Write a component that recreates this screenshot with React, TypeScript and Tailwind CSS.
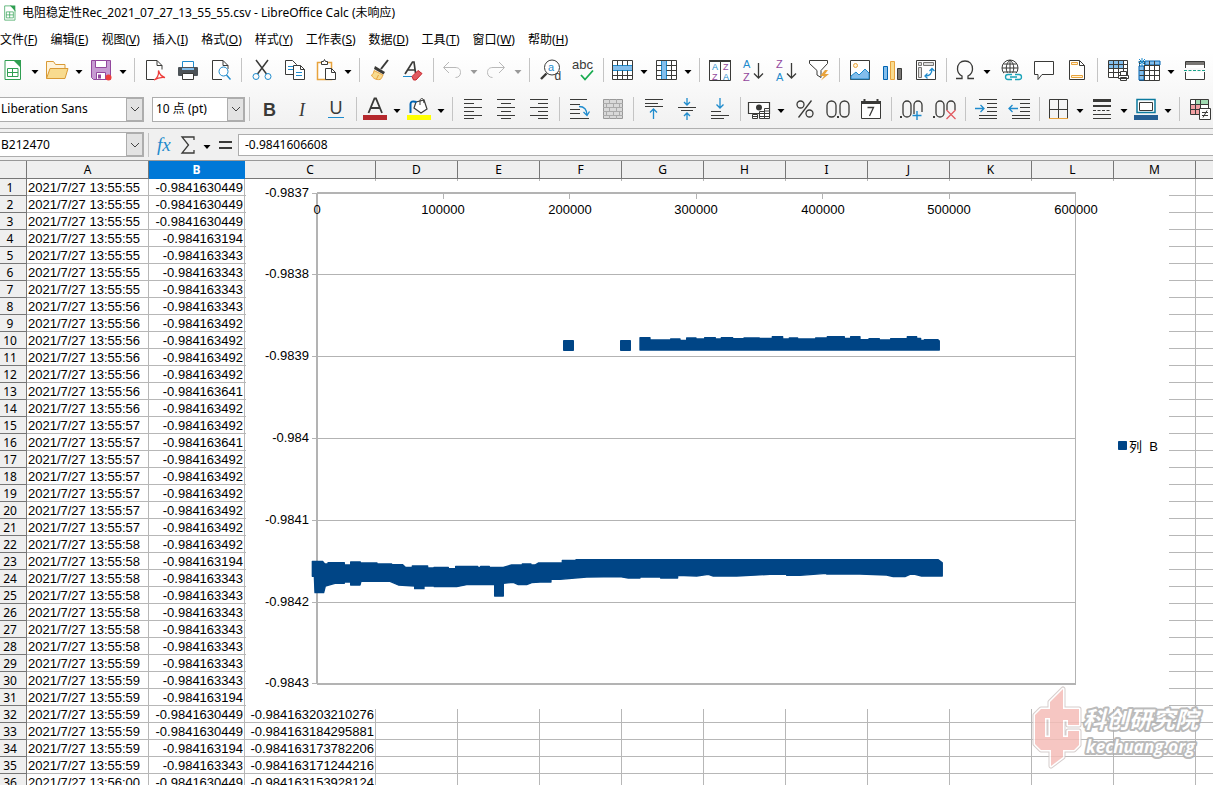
import type { ReactNode } from "react";

const INK = "#3a3a38";
const BLUE = "#1e8bcd";
const GRAY = "#797774";

const menus = [
  ["文件", "F"],
  ["编辑", "E"],
  ["视图", "V"],
  ["插入", "I"],
  ["格式", "O"],
  ["样式", "Y"],
  ["工作表", "S"],
  ["数据", "D"],
  ["工具", "T"],
  ["窗口", "W"],
  ["帮助", "H"],
];

// All icons are drawn on a 24 x 24 grid.
const icons: Record<string, ReactNode> = {
  newSheet: (
    <>
      <path d="M4 2.5h10l5.5 5.5v13.5H4z" fill="#fff" stroke="#2f9e51" />
      <path d="M12 2h8v8z" fill="#2f9e51" />
      <path d="M6.500 10.500h10.500v8H6.500zM6.500 14.500h10.500M11.500 10.500v8" stroke="#2f9e51" />
    </>
  ),
  open: (
    <>
      <path d="M1.500 20.500v-17h7l2 3h9.500v4" fill="#fff3da" stroke="#d99a35" />
      <path d="M1.500 20.500l3.500-10h18l-3 10z" fill="#f8db8f" stroke="#d99a35" />
    </>
  ),
  save: (
    <>
      <path d="M2.500 2.500h19v19h-17l-2-2z" fill="#c79bd2" stroke="#92479d" />
      <path d="M6.500 2.500h11v7h-11z" fill="#fff" stroke="#92479d" />
      <path d="M7.500 14.500h9v7h-9z" fill="#fff" stroke="#92479d" />
      <path d="M9 16.500h3v4H9z" fill="#92479d" />
      <circle cx="19.500" cy="19.500" r="3" fill="#ed3d3b" />
    </>
  ),
  pdf: (
    <>
      <path d="M11 21.500H3.500v-19H14l5 5v4" fill="#fff" stroke={INK} />
      <path d="M14 2.500v5h5" stroke={INK} />
      <path d="M11 22c3-1 5-5 4.500-9.500 1 4 3 6 6.500 7-4-.5-7 0-11 2.500z" stroke="#ed3d3b" strokeWidth="1.3" />
    </>
  ),
  print: (
    <>
      <path d="M6.500 10V3.500h11V10" fill="#fff" stroke={BLUE} />
      <rect x="2" y="9" width="20" height="9" rx="1" fill="#4d5358" />
      <path d="M6 10h12v2H6z" fill="#83beec" />
      <path d="M6.500 15.500h11v6h-11z" fill="#fff" stroke={INK} />
    </>
  ),
  preview: (
    <>
      <path d="M13 21.500H3.500v-19H14l5 5V11" fill="#fff" stroke={INK} />
      <path d="M14 2.500v5h5" stroke={INK} />
      <circle cx="14.500" cy="13.500" r="4.500" fill="#fff" stroke={BLUE} />
      <path d="M17.500 17l4 4.500" stroke={BLUE} strokeWidth="1.4" />
    </>
  ),
  cut: (
    <>
      <path d="M6 2l10.500 14M18 2L7.500 16" stroke={INK} strokeWidth="1.500" />
      <circle cx="6" cy="18.500" r="3" stroke={BLUE} />
      <circle cx="18" cy="18.500" r="3" stroke={BLUE} />
    </>
  ),
  copy: (
    <>
      <path d="M2.500 2.500h7l4 4v10h-11z" fill="#fff" stroke={INK} />
      <path d="M5 8.500h5M5 11.500h5" stroke={BLUE} />
      <path d="M10.500 7.500h7l4 4v10h-11z" fill="#fff" stroke={INK} />
      <path d="M17.500 7.500v4h4" stroke={INK} />
      <path d="M13 14.500h6M13 17.500h6" stroke={BLUE} />
    </>
  ),
  paste: (
    <>
      <path d="M3.500 4.500h14v17h-14z" fill="#fff" stroke="#e8a33d" strokeWidth="1.500" />
      <path d="M7.500 6.500v-3h2l1-2 1 2h2v3z" fill="#fff" stroke={INK} />
      <path d="M11.500 10.500h6l4 4v7h-10z" fill="#fff" stroke={INK} />
      <path d="M17.500 10.500v4h4" stroke={INK} />
    </>
  ),
  brush: (
    <>
      <path d="M20 2l-7 9" stroke={INK} strokeWidth="2" />
      <path d="M7 8l10 6-1.500 2.500L6 11z" fill={INK} />
      <path d="M6 12.500l9 4.500c-1 2-1.500 4-3 4.500-4 .5-7-1-8.500-4.500 1.500-.5 2.500-2.500 2.500-4.500z" fill="#f8db8f" stroke="#e8a33d" />
      <path d="M8.500 21l2-4" stroke="#e8a33d" />
    </>
  ),
  clearFormat: (
    <>
      <path d="M4 16L11.500 4h1.500l1.500 11M7 12h7" stroke={INK} strokeWidth="1.700" />
      <path d="M2 18.500h9" stroke={BLUE} />
      <path d="M11 18.500l6-6 4 3-6 6.500h-2.500z" fill="#e05a60" stroke="#c9252b" />
    </>
  ),
  undo: <path d="M9 4L3.500 9.500 9 15M4 9.500h11c4 0 5.500 2 5.500 5s-2 5-5 5" stroke="#b8b8b8" />,
  redo: <path d="M15 4l5.500 5.500L15 15M20 9.500H9c-4 0-5.500 2-5.500 5s2 5 5 5" stroke="#b8b8b8" />,
  find: (
    <>
      <circle cx="14" cy="9.500" r="7.500" fill="#fff" stroke={INK} />
      <path d="M8.500 15.500L3 21" stroke={INK} strokeWidth="2.400" />
      <text x="10" y="13" fontSize="11" fill={BLUE}>a</text>
      <text x="16.500" y="22" fontSize="12" fill={INK}>d</text>
    </>
  ),
  spell: (
    <>
      <text x="1" y="11" fontSize="13" fill={INK}>abc</text>
      <path d="M10 17l4 4.500 8-9" stroke="#18ab50" strokeWidth="1.800" />
    </>
  ),
  row: (
    <>
      <path d="M2.500 2.500h20v19h-20z" fill="#fff" />
      <path d="M2 7h21v6H2z" fill="#83beec" />
      <path d="M2.500 7.500h20M2.500 12.500h20" stroke={BLUE} />
      <path d="M2.500 2.500h20v19h-20zM2.500 17.500h20M7.500 2.500v5M12.500 2.500v5M17.500 2.500v5M7.500 12.500v9M12.500 12.500v9M17.500 12.500v9" stroke={INK} />
    </>
  ),
  column: (
    <>
      <path d="M2.500 2.500h20v19h-20z" fill="#fff" />
      <path d="M8 2h5v20H8z" fill="#83beec" />
      <path d="M7.500 2.500v19M12.500 2.500v19" stroke={BLUE} />
      <path d="M2.500 2.500h20v19h-20zM17.500 2.500v19M2.500 7.500h5M2.500 12.500h5M2.500 17.500h5M12.500 7.500h10M12.500 12.500h10M12.500 17.500h10" stroke={INK} />
    </>
  ),
  sort: (
    <>
      <path d="M1.500 2.500h21v20h-21zM12.500 2.500v20" fill="#fff" stroke={INK} />
      <path d="M1 2h22v2H1z" fill={INK} />
      <text x="4" y="12" fontSize="9" fill={BLUE}>A</text>
      <text x="4" y="22" fontSize="9" fill="#92479d">Z</text>
      <text x="15" y="12" fontSize="9" fill="#92479d">Z</text>
      <text x="15" y="22" fontSize="9" fill={BLUE}>A</text>
    </>
  ),
  sortAsc: (
    <>
      <text x="2" y="10" fontSize="11" fill={BLUE}>A</text>
      <text x="2" y="23" fontSize="11" fill="#92479d">Z</text>
      <path d="M17.500 5v15M13 15.500l4.500 4.500 4.500-4.500" stroke={INK} strokeWidth="1.300" />
    </>
  ),
  sortDesc: (
    <>
      <text x="2" y="10" fontSize="11" fill="#92479d">Z</text>
      <text x="2" y="23" fontSize="11" fill={BLUE}>A</text>
      <path d="M17.500 5v15M13 15.500l4.500 4.500 4.500-4.500" stroke={INK} strokeWidth="1.300" />
    </>
  ),
  filter: (
    <>
      <path d="M2.500 2.500h18v3l-6.500 7v7l-4-2.500v-4.500l-7.500-7z" fill="#fff" stroke={INK} />
      <path d="M18 12l-5 6h4l-3 4.500 8-6.500h-4l3-4z" fill="#e8a33d" />
    </>
  ),
  image: (
    <>
      <path d="M2.500 2.500h19v19h-19z" fill="#fff" stroke={INK} />
      <circle cx="7.500" cy="7.500" r="2" fill="#fff3da" stroke="#e8a33d" />
      <path d="M3 18l5-4 3 3 6-6 4 4v6H3z" fill="#83beec" stroke={BLUE} />
    </>
  ),
  chart: (
    <>
      <path d="M2.500 8.500h4v13h-4z" fill="#83beec" stroke="#0063b1" />
      <path d="M9.500 3.500h4v18h-4z" fill="#f8db8f" stroke="#e8a33d" />
      <path d="M16.500 10.500h4v11h-4z" fill={GRAY} stroke={INK} />
    </>
  ),
  pivot: (
    <>
      <path d="M2.500 2.500h19v19h-19z" fill="#fff" stroke={INK} />
      <path d="M4.500 4.500h3v3h-3zM9.500 4.500h10v3h-10zM4.500 9.500h3v10h-3z" fill="#ddd" stroke={GRAY} />
      <path d="M11 18c5 0 7-2 7-7M15.500 13l2.500-2.500 2.500 2.500M13.500 15.500L11 18l2.500 2.500" stroke={BLUE} strokeWidth="1.300" />
    </>
  ),
  omega: (
    <path d="M3 20.500h6v-2.500c-3-1.500-4.500-4-4.500-7 0-5 3-8 7.500-8s7.500 3 7.500 8c0 3-1.500 5.500-4.500 7v2.500h6" stroke={INK} strokeWidth="1.300" />
  ),
  link: (
    <>
      <circle cx="11" cy="10" r="8" fill="#fff" stroke={INK} />
      <path d="M3 10h16M4.500 6h13M4.500 14h13M11 2v16M11 2c-5 4-5 12 0 16M11 2c5 4 5 12 0 16" stroke={INK} />
      <path d="M5 15h18v8H5z" fill="#fafafa" />
      <path d="M13 16.500H9a2.500 2.500 0 000 5h4M16 16.500h4a2.500 2.500 0 010 5h-4M11 19h7" stroke="#1aa3b8" strokeWidth="1.300" />
    </>
  ),
  comment: <path d="M2.500 3.500h19v13H10l-4 5v-5H2.500z" fill="#fff" stroke={INK} />,
  headerFooter: (
    <>
      <path d="M4.500 2.500h10l5 5v14h-15z" fill="#fff" stroke={INK} />
      <path d="M14.500 2.500v5h5" stroke={INK} />
      <path d="M6.500 4.500h6v2h-6zM6.500 17.500h11v2h-11z" fill="#fff3da" stroke="#e8a33d" />
    </>
  ),
  printArea: (
    <>
      <path d="M2.500 2.500h19v17h-19z" fill="#fff" />
      <path d="M3 3h14v8H3z" fill="#83beec" />
      <path d="M2.500 2.500h19v17h-19zM2.500 6.500h19M2.500 10.500h19M2.500 14.500h19M7.500 2.500v17M12.500 2.500v17M17.500 2.500v17" stroke={INK} />
      <path d="M14.500 13.500h6v4h-6zM12.500 17.500h10v3h-10zM14.500 19.500h6v3h-6z" fill="#fff" stroke={INK} />
    </>
  ),
  freeze: (
    <>
      <path d="M2.500 3.500h20v19h-20z" fill="#fff" stroke={INK} />
      <path d="M8 3h15v4H8zM2 8h5v14H2z" fill="#83beec" stroke="#0063b1" />
      <path d="M7.500 3v19M12.500 3v19M17.500 3v19M2.500 12.500h20M2.500 17.500h20M7.500 7.500h15" stroke={INK} />
      <path d="M5 0v8M1 4h8M2 1l6 6M8 1L2 7" stroke={BLUE} />
    </>
  ),
  split: (
    <>
      <path d="M2.500 3.500h19v18h-19z" fill="#fff" stroke={INK} />
      <path d="M3 4h18v3H3z" fill={GRAY} />
      <path d="M0 10h24v4H0z" fill="#fafafa" />
      <path d="M1 12.500h22" stroke="#1aa38a" strokeDasharray="3 1.500" />
    </>
  ),
  bold: <text x="5" y="18.500" fontSize="18" fontWeight="700" fill={INK}>B</text>,
  italic: <text x="8" y="18.500" fontSize="18" fontStyle="italic" fontFamily="Liberation Serif, serif" fill={INK}>I</text>,
  underline: (
    <>
      <text x="5.500" y="17" fontSize="18" fill={INK}>U</text>
      <path d="M4 20.500h16" stroke={BLUE} />
    </>
  ),
  fontColor: (
    <>
      <path d="M5.500 16L11.500 1.500h1.500L19 16M8 11h8.500" stroke={INK} strokeWidth="1.800" />
      <path d="M0 18h24v5H0z" fill="#b5282d" />
    </>
  ),
  highlight: (
    <>
      <path d="M9 5l8-2 3 9-6 4-7-5z" fill="#fff" stroke={INK} strokeWidth="1.200" />
      <path d="M13 8V3c1-2 3-2 3.500 0L17 6" stroke={INK} />
      <path d="M3.500 16V7c0-2 2-3.500 6-2" stroke="#0063b1" strokeWidth="2" />
      <path d="M0 18h24v5H0z" fill="#ffff00" />
    </>
  ),
  left: <path d="M3 2.500h18M3 6.500h10M3 10.500h18M3 14.500h10M3 18.500h18M3 21.500h10" stroke={INK} />,
  center: <path d="M3 2.500h18M7 6.500h10M3 10.500h18M7 14.500h10M3 18.500h18M7 21.500h10" stroke={INK} />,
  right: <path d="M3 2.500h18M11 6.500h10M3 10.500h18M11 14.500h10M3 18.500h18M11 21.500h10" stroke={INK} />,
  wrap: (
    <>
      <path d="M2 2.500h17M2 7.500h10M2 12.500h10M2 16.500h10M2 21.500h19" stroke={INK} />
      <path d="M11 9.500c6 0 8 3 8 9M15.500 15l3.500 3.500 2.500-4" stroke={BLUE} strokeWidth="1.300" />
    </>
  ),
  merge: (
    <>
      <path d="M2.500 2.500h19v19h-19z" fill="#d9d9d9" stroke="#999" />
      <path d="M2 6.500h20M2 10.500h20M2 14.500h20M2 18.500h20M8.500 2v4M15.500 2v4M5.500 6v4M12.500 6v4M18.500 6v4M8.500 10v4M15.500 10v4M5.500 14v4M12.500 14v4M18.500 14v4M8.500 18v4M15.500 18v4" stroke="#aaa" />
    </>
  ),
  top: (
    <>
      <path d="M3 2.500h18M3 6.500h13M3 9.500h18" stroke={INK} />
      <path d="M11.500 22V12M8 15.500l3.500-3.500 3.500 3.500" stroke={BLUE} strokeWidth="1.300" />
    </>
  ),
  middle: (
    <>
      <path d="M3 10.500h18M6 13.500h12" stroke={INK} />
      <path d="M12 1v7M9 5l3 3 3-3M12 23v-7M9 19l3-3 3 3" stroke={BLUE} strokeWidth="1.300" />
    </>
  ),
  bottom: (
    <>
      <path d="M3 14.500h10M3 18.500h18M3 21.500h13" stroke={INK} />
      <path d="M12 1v10M8.500 7.500L12 11l3.500-3.500" stroke={BLUE} strokeWidth="1.300" />
    </>
  ),
  currency: (
    <>
      <path d="M1.500 5.500h21v11h-21z" fill="#fff" stroke={INK} strokeWidth="1.200" />
      <circle cx="12" cy="10.500" r="3" fill={INK} />
      <path d="M5.500 17.500h5v4h-5zM12.500 14.500h5v7h-5zM17.500 11.500h5v10h-5z" fill="#fff" stroke={INK} />
      <path d="M5 19.500h6M12 16.500h11M12 19.500h11M17 14h6" stroke={INK} />
    </>
  ),
  percent: (
    <>
      <circle cx="7.500" cy="7.500" r="3.500" stroke={INK} strokeWidth="1.300" />
      <circle cx="16.500" cy="16.500" r="3.500" stroke={INK} strokeWidth="1.300" />
      <path d="M18.500 3.500l-13 17" stroke={INK} strokeWidth="1.300" />
    </>
  ),
  number: (
    <>
      <rect x="1" y="4" width="9" height="16" rx="4.500" stroke={INK} strokeWidth="1.300" />
      <rect x="14" y="4" width="9" height="16" rx="4.500" stroke={INK} strokeWidth="1.300" />
      <path d="M11 19h2v2h-2z" fill={INK} />
    </>
  ),
  date: (
    <>
      <path d="M2.500 4.500h19v17h-19z" fill="#fff" stroke={INK} />
      <path d="M2 4h20v3H2z" fill={INK} />
      <path d="M5.500 2v4M18.500 2v4" stroke={INK} strokeWidth="2" />
      <path d="M8.500 10.500h6l-4 8.500" stroke={INK} strokeWidth="1.300" />
    </>
  ),
  addDecimal: (
    <>
      <path d="M0 19h2v2H0z" fill={INK} />
      <rect x="3" y="4" width="8" height="16" rx="4" stroke={INK} strokeWidth="1.300" />
      <path d="M14 17V8a4 4 0 018 0v7" stroke={INK} strokeWidth="1.300" />
      <path d="M17 14v9M12.500 18.500h9" stroke={BLUE} strokeWidth="1.400" />
    </>
  ),
  removeDecimal: (
    <>
      <path d="M0 19h2v2H0z" fill={INK} />
      <rect x="3" y="4" width="8" height="16" rx="4" stroke={INK} strokeWidth="1.300" />
      <path d="M14 13V8a4 4 0 018 0v5" stroke={INK} strokeWidth="1.300" />
      <path d="M13.500 13l9 9M22.500 13l-9 9" stroke="#e05a60" strokeWidth="1.300" />
    </>
  ),
  indent: (
    <>
      <path d="M5 2.500h18M13 6.500h10M13 10.500h10M13 14.500h10M5 18.500h18M5 21.500h18" stroke={INK} />
      <path d="M1 11.500h9M6.500 8l3.500 3.500L6.500 15" stroke={BLUE} strokeWidth="1.300" />
    </>
  ),
  outdent: (
    <>
      <path d="M5 2.500h18M13 6.500h10M13 10.500h10M13 14.500h10M5 18.500h18M5 21.500h18" stroke={INK} />
      <path d="M2 11.500h9M5.500 8L2 11.500 5.500 15" stroke={BLUE} strokeWidth="1.300" />
    </>
  ),
  borders: (
    <>
      <path d="M3.500 21.500v-19h18v19M3.500 12.500h18M12.500 2.500v19" stroke={INK} />
      <path d="M3 21.500h19" stroke="#e8a33d" />
    </>
  ),
  borderStyle: (
    <>
      <path d="M3 3.500h18" stroke={INK} strokeWidth="3" />
      <path d="M3 9h18" stroke={INK} strokeWidth="2" />
      <path d="M3 13.500h18" stroke={INK} strokeDasharray="3 1.500" />
      <path d="M3 17.500h18" stroke={INK} />
      <path d="M3 21.500h18" stroke={INK} />
    </>
  ),
  borderColor: (
    <>
      <path d="M3 15.500v-13h18v13z" fill="#fff" stroke="#0b7a9e" strokeWidth="1.500" />
      <path d="M5.500 5.500h13v8h-13z" stroke={INK} />
      <path d="M0 18h24v5H0z" fill="#255f93" />
    </>
  ),
  conditional: (
    <>
      <path d="M2.500 2.500h18v15h-18z" fill="#fff" />
      <path d="M8 3h12v5H8z" fill="#a1dbb2" />
      <path d="M3 8h9v9H3z" fill="#f2a1a3" />
      <path d="M2.500 2.500h18v15h-18zM2.500 7.500h18M2.500 12.500h18M7.500 2.500v15M12.500 2.500v15" stroke={INK} />
      <path d="M11.500 11.500h11v11h-11z" fill="#fff" stroke={INK} />
      <path d="M14 15.500h6M14 18.500h6M19 13.500l-4 7" stroke={INK} />
    </>
  ),
  equals: <path d="M5 9h13M5 15h13" stroke={INK} strokeWidth="2.200" />,
  sigma: <path d="M18 7V4H6l6.500 8L6 20h12v-3" stroke={INK} strokeWidth="1.300" />,
  fx: (
    <text x="5" y="18" fontSize="19" fontStyle="italic" fontFamily="Liberation Serif, serif" fill={BLUE}>
      fx
    </text>
  ),
};

// "+" after a name adds a drop-down arrow, "!" dims the arrow, "|" is a separator.
const standardBar =
  "newSheet+ open+ save+ | pdf print preview | cut copy paste+ | brush clearFormat | undo! redo! | find spell | row+ column+ | sort sortAsc sortDesc filter | image chart pivot | omega+ link comment headerFooter | printArea freeze+ split";
const formatBar =
  "| bold italic underline | fontColor+ highlight+ | left center right | wrap merge | top middle bottom | currency+ percent number date | addDecimal removeDecimal | indent outdent | borders+ borderStyle+ borderColor+ | conditional";

const columns = ["A", "B", "C", "D", "E", "F", "G", "H", "I", "J", "K", "L", "M", ""];

const values =
  "0449 0449 0449 194 343 343 343 343 492 492 492 492 641 492 492 641 492 492 492 492 492 492 194 343 343 343 343 343 343 343 194 0449 0449 194 343 0449".split(" ");

const averages: Record<number, string> = {
  32: "-0.984163203210276",
  33: "-0.984163184295881",
  34: "-0.984163173782206",
  35: "-0.984163171244216",
  36: "-0.984163153928124",
};

// The logger writes seven samples each second.
const rows = values.map((value, index) => {
  const second = 55 + Math.floor(index / 7);
  return {
    number: index + 1,
    time: second < 60 ? `2021/7/27 13:55:${second}` : "2021/7/27 13:56:00",
    value: `-0.984163${value}`,
    average: averages[index + 1] ?? "",
  };
});

function Icon({ name }: { name: string }) {
  return (
    <svg viewBox="0 0 24 24" className="h-6 w-6 shrink-0 overflow-visible" fill="none" fontFamily="Liberation Sans, sans-serif" aria-hidden="true">
      {icons[name]}
    </svg>
  );
}

function Arrow({ dim = false }: { dim?: boolean }) {
  return (
    <svg viewBox="0 0 8 4" className="mt-1 h-1 w-2" aria-hidden="true">
      <path d="M0.500 0h7L4 4z" fill={dim ? "#999" : "#000"} />
    </svg>
  );
}

function Separator() {
  return (
    <span className="flex w-2 shrink-0 justify-center">
      <span className="h-6 w-px bg-[#c4c4c4]" />
    </span>
  );
}

function Tools({ items }: { items: string }) {
  return (
    <>
      {items.split(" ").map((item, index) => {
        if (item === "|") return <Separator key={index} />;
        const name = item.replace(/[+!]/, "");
        if (name === item) {
          return (
            <button key={index} aria-label={name} className="flex w-[33px] shrink-0 justify-center">
              <Icon name={name} />
            </button>
          );
        }
        return (
          <div key={index} className="flex shrink-0 items-center">
            <button aria-label={name} className="flex w-[29px] justify-center">
              <Icon name={name} />
            </button>
            <button aria-label={`${name} options`} className="flex h-6 w-[15px] items-center justify-center">
              <Arrow dim={item.endsWith("!")} />
            </button>
          </div>
        );
      })}
    </>
  );
}

function Combo({ label, value, className }: { label: string; value: string; className: string }) {
  return (
    <div className={`flex h-[25px] shrink-0 border border-[#adadad] bg-white ${className}`}>
      <input aria-label={label} defaultValue={value} className="min-w-0 flex-1 pl-px outline-none" />
      <button aria-label={`${label} list`} className="flex w-[17px] items-center justify-center border border-[#adadad] bg-[#e3e3e3]">
        <svg viewBox="0 0 10 6" className="h-1.5 w-2.5" fill="none" aria-hidden="true">
          <path d="M1 1l4 4 4-4" stroke="#444" />
        </svg>
      </button>
    </div>
  );
}

function Chart() {
  const yLabels = ["-0.9837", "-0.9838", "-0.9839", "-0.984", "-0.9841", "-0.9842", "-0.9843"];
  const xLabels = ["0", "100000", "200000", "300000", "400000", "500000", "600000"];

  return (
    <svg width="923" height="528" viewBox="0 0 923 528" className="block bg-white" fontFamily="Liberation Sans, Noto Sans CJK SC, sans-serif" fontSize="13">
      <g stroke="#b3b3b3" fill="none">
        {yLabels.map((label, i) => (
          <path key={label} d={`M66 ${Math.floor(12 + i * 81.8) + 0.5}H829`} />
        ))}
        {xLabels.map((label, i) => (
          <path key={label} d={`M${Math.round(70 + i * 126.5) + 0.5} 12v6`} />
        ))}
        <path d="M71 12v491M71 12h759M71 503h759" strokeWidth="2" />
        <path d="M829.500 12v492" />
      </g>
      {yLabels.map((label, i) => (
        <text key={label} x="63" y={Math.floor(16 + i * 81.8)} textAnchor="end">
          {label}
        </text>
      ))}
      {xLabels.map((label, i) => (
        <text key={label} x={Math.floor(71 + i * 126.5)} y="33" textAnchor="middle">
          {label}
        </text>
      ))}
      <g fill="#004586" stroke="#004586" strokeLinejoin="round">
        <path d="M317.500 159.500h10v10h-10zM374.500 159.500h10v10h-10z" />
        {/* upper band */}
        <path
          transform="translate(374 144) scale(0.3333)"
          strokeWidth="4"
          d="M60 38H90V45H152V42H180V46H200V39H228V42H254V38H286V42H304V38H338V41H372V39H418V40H457V35H488V42H508V39H533V42H587V39H622V35H673V40H692V35H720V44H747V41H778V45H812V41H862V35H890V40H902V46H913V44H954L958 48V75H60z"
        />
        {/* lower band */}
        <path
          transform="translate(54 359) scale(0.3333)"
          strokeWidth="4"
          d="M37 64H68L74 72H84V68H133V75H152V66H181V69H231V72H275V74H308L316 82H337V78H383V84H402V82H445V86H467V79H533V82H542V79H568V82H610L635 75H667V72H693V75H705L715 69H787V61H828V59H1915L1927 68V108H1865L1845 103H1830L1815 110H1780L1760 105L1680 102H1580V100L1500 106H1460V103H1410L1310 108H1240L1225 103L1190 108L1133 106V114H1082V111H1020V114H985L960 110L860 111L780 118H753V126H720L695 128L680 134H655L640 127L610 130V168H584V134H500L470 140H403V138H372V146H344V138L295 135L270 124H183L180 135H152V126H133V130H105L76 138L71 158H45L43 109H37z"
        />
        <path d="M872.500 260.500h8v8h-8z" />
      </g>
      <text x="883" y="270" xmlSpace="preserve">
        列  B
      </text>
    </svg>
  );
}

function Watermark() {
  const emblem =
    "M17 15L30 2V22H46V38H35V33H30V50H35V44H46V58L41 63H30V70L18 79V63H8L2 57V28L8 22H17zM12 31V50H17V31z";

  return (
    <svg width="168" height="82" viewBox="0 0 168 82" className="overflow-visible opacity-85" aria-label="科创研究院 kechuang.org">
      <g fill="#f5bdb8" fillRule="evenodd" strokeLinejoin="round" paintOrder="stroke">
        <path d={emblem} stroke="#cfc5c4" strokeWidth="5" />
        <path d={emblem} stroke="#fff" strokeWidth="3" />
      </g>
      <g fill="#fff" stroke="#b0b0b0" strokeWidth="4" strokeLinejoin="round" paintOrder="stroke" fontStyle="italic">
        <text x="50" y="41" fontSize="23" fontWeight="700" fontFamily="Noto Sans CJK SC, sans-serif">
          科创研究院
        </text>
        <text x="53" y="66" fontSize="17" fontWeight="700" fontFamily="Open Sans, sans-serif">
          kechuang.org
        </text>
      </g>
    </svg>
  );
}

export default function App() {
  return (
    <div className="relative flex h-screen flex-col overflow-hidden bg-white font-['Noto_Sans','Noto_Sans_CJK_SC',sans-serif] text-[12px] leading-4 text-black">
      {/* Title bar */}
      <header className="flex h-[26px] shrink-0 items-center gap-1 pl-0.5">
        <svg viewBox="0 0 24 24" className="h-[18px] w-4" fill="none" preserveAspectRatio="none" aria-hidden="true">
          {icons.newSheet}
        </svg>
        <h1 className="whitespace-nowrap">电阻稳定性Rec_2021_07_27_13_55_55.csv - LibreOffice Calc (未响应)</h1>
      </header>

      {/* Menu bar */}
      <nav className="flex h-[27px] shrink-0 items-center gap-[13px]">
        {menus.map(([label, key]) => (
          <button key={key} className="whitespace-nowrap">
            {label}(<u>{key}</u>)
          </button>
        ))}
      </nav>

      {/* Toolbars */}
      <div className="shrink-0 border-b border-[#b0b0b0] bg-linear-to-b from-white to-[#f1f1f1]">
        <div className="-ml-0.5 flex h-[37px] items-center overflow-hidden pb-[3px]">
          <Tools items={standardBar} />
        </div>
        <div className="flex h-[38px] items-center overflow-hidden">
          <Combo label="Font name" value="Liberation Sans" className="w-36 border-l-0" />
          <Combo label="Font size" value="10 点 (pt)" className="ml-2 w-[93px] pl-0.5" />
          <Tools items={formatBar} />
        </div>
      </div>

      {/* Formula bar */}
      <div className="flex h-8 shrink-0 items-center border-b border-[#999] bg-[#f0f0f0]">
        <Combo label="Name box" value="B212470" className="w-36 border-l-0" />
        <Separator />
        <button aria-label="Function wizard" className="flex w-6 justify-center">
          <Icon name="fx" />
        </button>
        <button aria-label="Sum" className="flex w-6 justify-center">
          <Icon name="sigma" />
        </button>
        <button aria-label="Sum options" className="flex h-6 w-[14px] items-center justify-center">
          <Arrow />
        </button>
        <button aria-label="Formula" className="flex w-6 justify-center">
          <Icon name="equals" />
        </button>
        <input aria-label="Formula input" defaultValue="-0.9841606608" className="h-[22px] min-w-0 flex-1 border border-r-0 border-[#adadad] bg-white pl-1.5 outline-none" />
      </div>

      {/* Sheet */}
      <main className="relative min-h-0 flex-1 overflow-hidden">
        <table className="w-full table-fixed border-separate border-spacing-0">
          <colgroup>
            <col className="w-[27px]" />
            <col className="w-[122px]" />
            <col className="w-24" />
            <col className="w-[131px]" />
            {columns.slice(3, 13).map((column) => (
              <col key={column} className="w-[82px]" />
            ))}
            <col />
          </colgroup>
          <thead>
            <tr className="h-[18px]">
              <th className="border-r border-b border-[#777] bg-[#efefef] p-0" />
              {columns.map((column) => (
                <th
                  key={column}
                  className={
                    column === "B"
                      ? "border-r border-b border-[#0078d7] bg-[#0078d7] p-0 font-bold text-white"
                      : "border-r border-b border-[#777] bg-[#efefef] p-0 font-normal last:border-r-0"
                  }
                >
                  {column}
                </th>
              ))}
            </tr>
          </thead>
          <tbody className="font-['Liberation_Sans',sans-serif] text-[13px] leading-[14px]">
            {rows.map((row) => (
              <tr key={row.number} className="h-[17px]">
                <th className="border-r border-b border-[#777] bg-[#efefef] p-0 pt-0.5 pr-1.5 font-['Noto_Sans',sans-serif] text-[12px] leading-[14px] font-normal">
                  {row.number}
                </th>
                <td className="border-r border-b border-[#b7b7b7] p-0 pt-0.5 pl-px whitespace-nowrap">{row.time}</td>
                <td className="border-r border-b border-[#b7b7b7] p-0 pt-0.5 pr-px text-right">{row.value}</td>
                <td className="border-r border-b border-[#b7b7b7] p-0 pt-0.5 pr-px text-right">{row.average}</td>
                {columns.slice(3).map((column) => (
                  <td key={column} className="border-r border-b border-[#b7b7b7] p-0 last:border-r-0" />
                ))}
              </tr>
            ))}
          </tbody>
        </table>
        <div className="absolute top-5 left-[246px]">
          <Chart />
        </div>
      </main>

      <div className="absolute right-3 bottom-4">
        <Watermark />
      </div>
    </div>
  );
}
